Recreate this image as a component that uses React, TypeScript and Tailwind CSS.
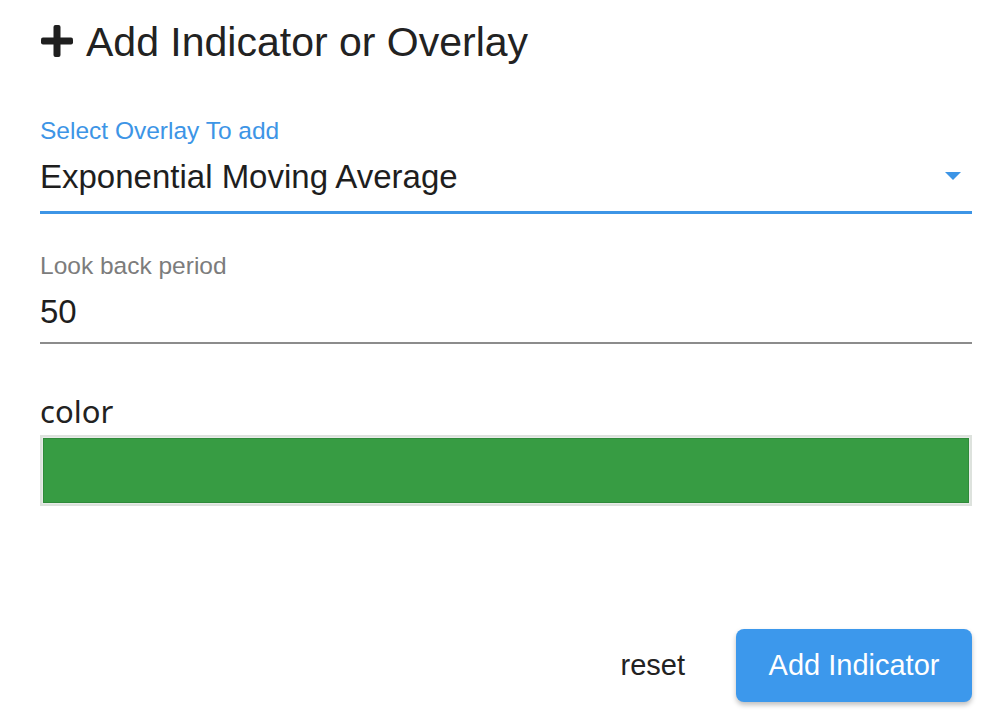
import React from "react";

export default function App() {
  return (
    <div className="h-[723px] w-[1000px] bg-white pl-10 pr-7 font-['Liberation_Sans',Arial,sans-serif]">
      {/* title */}
      <div className="flex h-[84px] items-center gap-[12px]">
        <svg width="34" height="34" viewBox="0 0 34 34" className="mt-[-2px]">
          <rect x="13.5" y="1" width="7" height="32" rx="2" fill="#1f1f1f" />
          <rect x="1" y="13.5" width="32" height="7" rx="2" fill="#1f1f1f" />
        </svg>
        <h1 className="text-[41px] leading-none text-[#222]">Add Indicator or Overlay</h1>
      </div>

      {/* select */}
      <div className="mt-[35px]">
        <div className="text-[24.5px] leading-none text-[#3d95e6]">Select Overlay To add</div>
        <div className="flex h-[70px] items-center justify-between border-b-[3px] border-[#3d95e6] pb-[1px]">
          <span className="text-[33px] text-[#1e1e1e]">Exponential Moving Average</span>
          <svg width="18" height="10" viewBox="0 0 18 10" className="mr-[10px] mt-[-2px]">
            <path d="M1 1h16l-8 8z" fill="#3d95e6" />
          </svg>
        </div>
      </div>

      {/* look back */}
      <div className="mt-[40px]">
        <div className="text-[24.5px] leading-none text-[#7c7c7c]">Look back period</div>
        <div className="flex h-[66px] items-center border-b-2 border-[#8c8c8c] pt-[3px]">
          <span className="text-[33px] text-[#1e1e1e]">50</span>
        </div>
      </div>

      {/* color */}
      <div className="mt-[52px]">
        <div className="font-['Noto_Sans',sans-serif] text-[31px] leading-none text-[#222]">color</div>
        <div className="mt-[8px] h-[71px] border-2 border-[#dde2dd] bg-[#e8ece8] p-px">
          <div className="h-full w-full border border-[#2f8a3a] bg-[#379c43]" />
        </div>
      </div>

      {/* actions */}
      <div className="mt-[123px] flex items-center justify-end gap-[51px]">
        <button className="text-[29px] text-[#222]">reset</button>
        <button className="h-[73px] w-[236px] rounded-[8px] bg-[#3c98ec] text-[29px] text-white shadow-[0_3px_5px_rgba(0,0,0,0.25)]">
          Add Indicator
        </button>
      </div>
    </div>
  );
}
